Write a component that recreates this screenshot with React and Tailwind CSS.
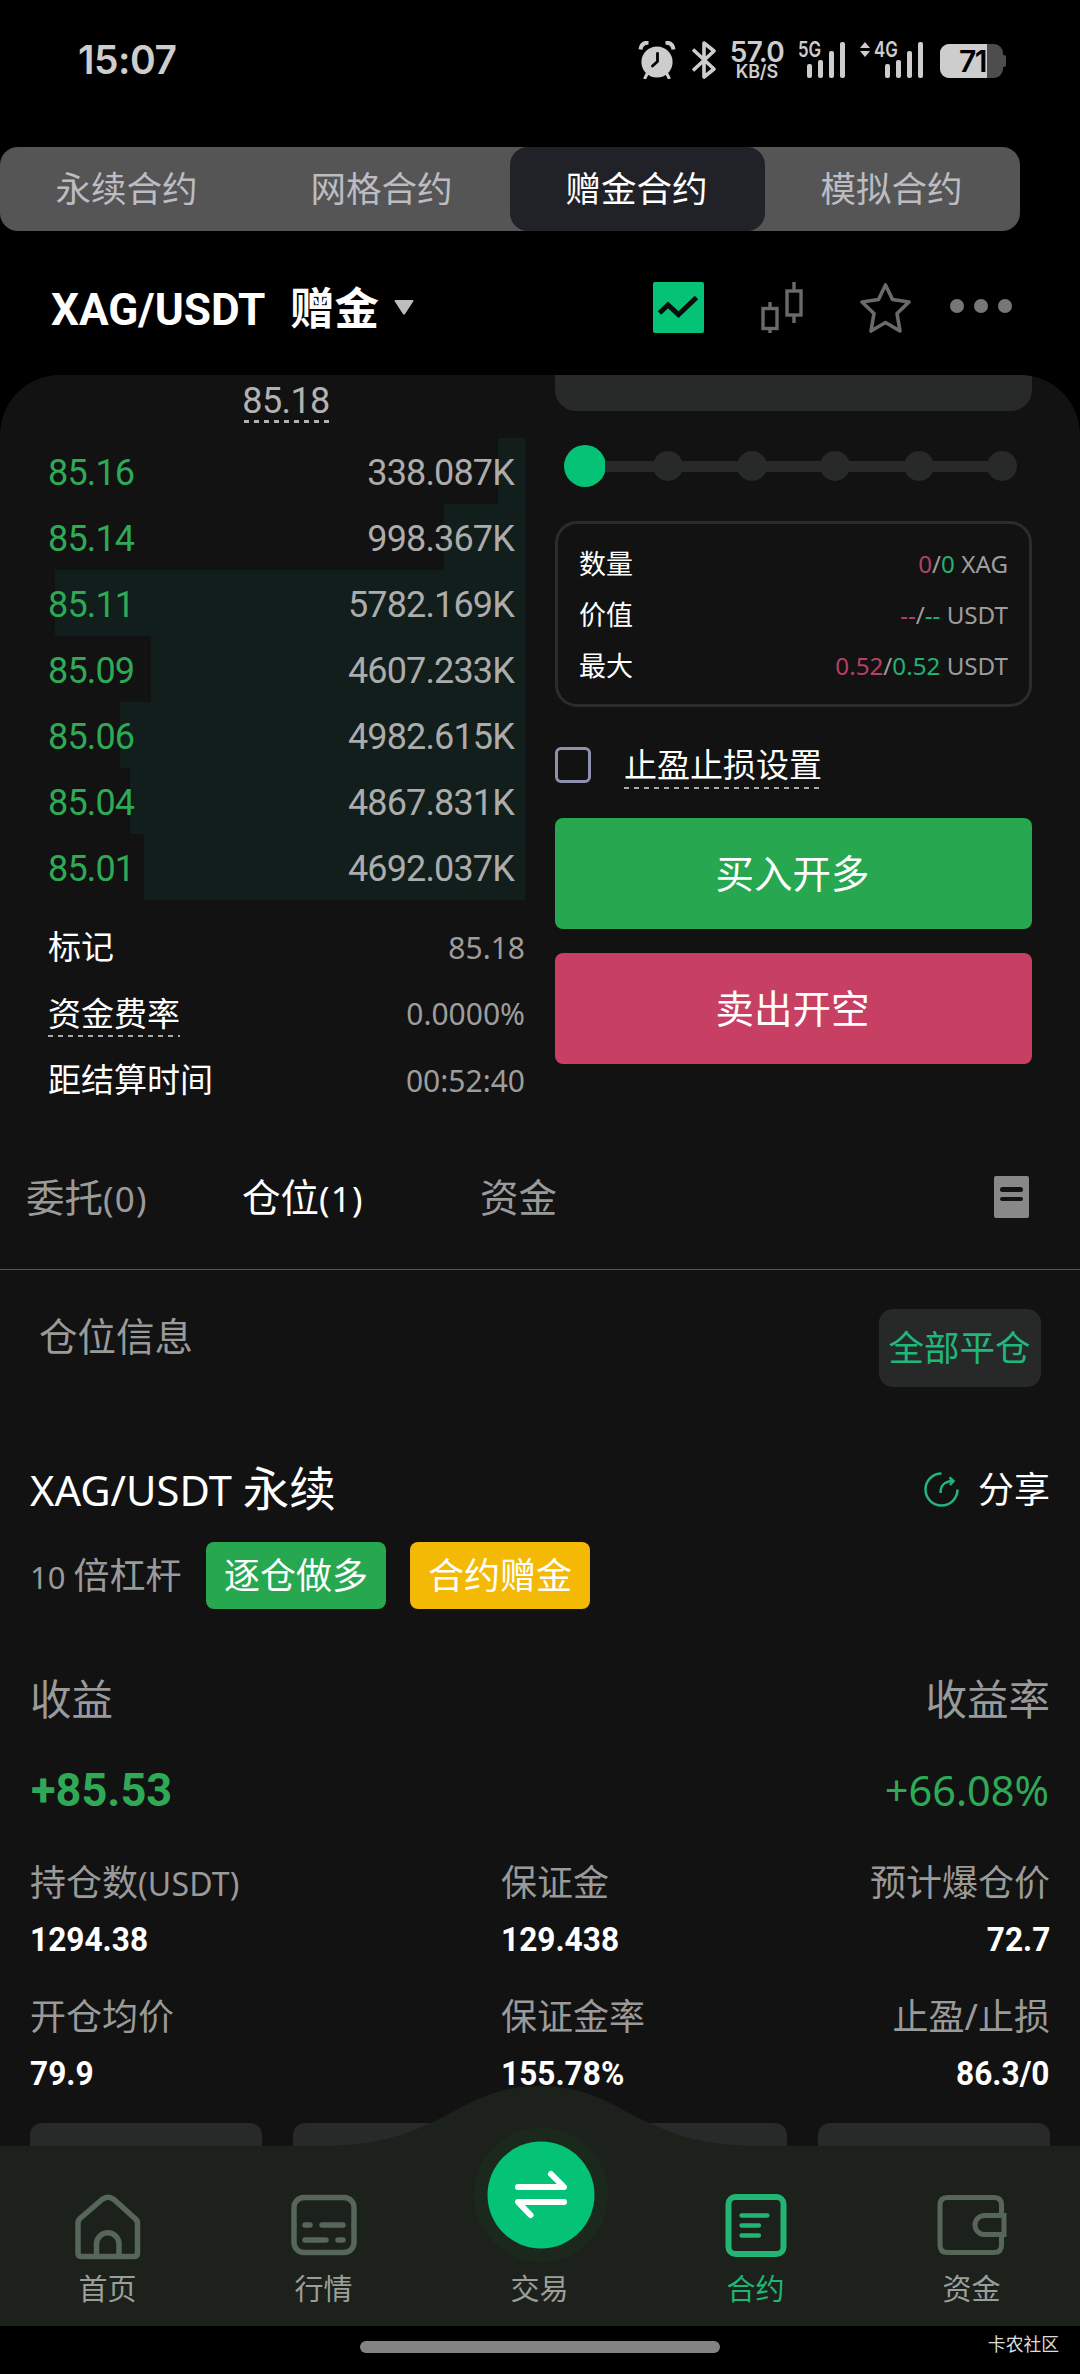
import React from "react";

const SANS = "font-['Noto_Sans','Noto_Sans_CJK_SC',sans-serif]";
const NUM = "font-['Roboto','Noto_Sans_CJK_SC',sans-serif]";
const UI = "font-['Inter','Noto_Sans',sans-serif]";

const DASH =
  "bg-[repeating-linear-gradient(90deg,currentColor_0_5px,transparent_5px_10px)]";

const bids = [
  { price: "85.16", amount: "338.087K", width: 27 },
  { price: "85.14", amount: "998.367K", width: 81 },
  { price: "85.11", amount: "5782.169K", width: 470 },
  { price: "85.09", amount: "4607.233K", width: 374 },
  { price: "85.06", amount: "4982.615K", width: 405 },
  { price: "85.04", amount: "4867.831K", width: 395 },
  { price: "85.01", amount: "4692.037K", width: 381 },
];

const stats = [
  [
    { label: "持仓数", unit: "(USDT)", value: "1294.38" },
    { label: "保证金", value: "129.438" },
    { label: "预计爆仓价", value: "72.7" },
  ],
  [
    { label: "开仓均价", value: "79.9" },
    { label: "保证金率", value: "155.78%" },
    { label: "止盈/止损", value: "86.3/0" },
  ],
];

function SignalBars() {
  return (
    <div className="flex items-end gap-[5.5px]">
      <i className="h-[14px] w-[5.4px] rounded-[2px] bg-[#cdcdcd]" />
      <i className="h-[18px] w-[5.4px] rounded-[2px] bg-[#cdcdcd]" />
      <i className="h-[27px] w-[5.4px] rounded-[2px] bg-[#cdcdcd]" />
      <i className="h-[36px] w-[5.4px] rounded-[2px] bg-[#cdcdcd]" />
    </div>
  );
}

function StatusBar() {
  return (
    <div className={`flex h-[147px] shrink-0 items-start text-[#cdcdcd] ${UI}`}>
      <div className="ml-[78px] mt-[40px] h-[40px] text-[39px] font-semibold leading-[40px] tracking-[-0.5px]">
        15:07
      </div>
      <div className="ml-auto mr-[74px] mt-[41px] flex h-[38px] items-start">
        <svg width="38" height="38" viewBox="0 0 38 38" fill="none">
          <circle cx="19" cy="21" r="15.600" fill="#cdcdcd" />
          <path d="M2.500 8.500 C3 4 6 1.500 10.500 1.700" stroke="#cdcdcd" strokeWidth="4" />
          <path d="M35.500 8.500 C35 4 32 1.500 27.500 1.700" stroke="#cdcdcd" strokeWidth="4" />
          <path d="M9 33 L7 37 M29 33 L31 37" stroke="#cdcdcd" strokeWidth="3" strokeLinecap="round" />
          <path d="M19.500 12.500 V20.500 L14.500 25" stroke="#000" strokeWidth="2.800" strokeLinecap="round" strokeLinejoin="round" />
        </svg>
        <svg className="ml-[15px]" width="26" height="38" viewBox="0 0 26 38" fill="none" stroke="#cdcdcd" strokeWidth="3.600" strokeLinejoin="round">
          <path d="M2 8.500 L23 28 L13 36 V2 L23 10 L2 29.500" />
        </svg>
        <div className="ml-[11px] flex w-[58px] flex-col items-center">
          <span className="h-[22px] text-[28px] font-semibold leading-[22px] tracking-[-0.7px]">57.0</span>
          <span className="h-[16px] text-[18px] font-semibold leading-[18px] tracking-[-0.2px]">KB/S</span>
        </div>
        <div className="ml-[12px] mt-px flex h-[36px]">
          <div className="flex h-[20px] w-[9px] items-start">
            <span className="-mt-[2px] w-[9px] origin-left scale-x-[0.8] text-[21px] font-semibold leading-[20px]">5G</span>
          </div>
          <SignalBars />
        </div>
        <div className="ml-[15px] mt-px flex h-[36px]">
          <svg className="mr-[4px]" width="10" height="15" viewBox="0 0 10 15">
            <path d="M5 0 L10 6 H0 Z M5 15 L10 9 H0 Z" fill="#cdcdcd" />
          </svg>
          <div className="flex h-[20px] w-[11px] items-start">
            <span className="-mt-[2px] w-[11px] origin-left scale-x-[0.8] text-[21px] font-semibold leading-[20px]">4G</span>
          </div>
          <SignalBars />
        </div>
        <div className="ml-[17px] mt-[3px] flex h-[34px] items-center">
          <div className="flex h-[34px] w-[63px] items-center overflow-hidden rounded-[9px] bg-[#4d4d4d]">
            <div className="flex h-[34px] w-[47px] items-center justify-end bg-[#cdcdcd] pr-px text-[30px] font-semibold leading-none tracking-[-1.5px] text-black">
              71
            </div>
          </div>
          <i className="h-[12px] w-[3px] rounded-r-[2px] bg-[#4d4d4d]" />
        </div>
      </div>
    </div>
  );
}

function ContractTabs() {
  const tabs = ["永续合约", "网格合约", "赠金合约", "模拟合约"];
  return (
    <div className="flex h-[84px] w-[1020px] shrink-0 rounded-[18px] bg-[#555555]">
      {tabs.map((t, i) => (
        <div
          key={t}
          className={
            i === 2
              ? "flex w-[255px] items-center justify-center rounded-[18px] bg-[#212227] pb-px pr-[2px] text-[35.500px] text-white"
              : "flex w-[255px] items-center justify-center pb-px pr-[2px] text-[35.500px] text-[#bcbcc2]"
          }
        >
          {t}
        </div>
      ))}
    </div>
  );
}

function PairHeader() {
  return (
    <div className="flex h-[144px] shrink-0 items-start pt-[51px]">
      <div className={`ml-[51px] mt-[2px] flex h-[51px] items-center font-bold text-white ${NUM}`}>
        <span className="w-[239px] text-[45px] leading-[51px]">
          <span className="inline-block origin-left scale-x-[0.98]">XAG/USDT</span>
        </span>
        <span className="mt-px text-[44.500px] leading-[51px]">赠金</span>
      </div>
      <svg className="ml-[15px] mt-[18px]" width="20" height="15" viewBox="0 0 20 15">
        <path d="M1.500 0 H18.500 Q20 0 19.200 1.500 L11 14 Q10 15 9 14 L0.800 1.500 Q0 0 1.500 0Z" fill="#bdbdbd" />
      </svg>
      <svg className="ml-auto" width="51" height="51" viewBox="0 0 51 51" fill="none">
        <rect width="51" height="51" rx="2" fill="#04c376" />
        <path d="M6.500 31 L15 23 L25.500 32.500 L43.500 15.500" stroke="#0c0c0c" strokeWidth="5" />
      </svg>
      <svg className="ml-[57px]" width="42" height="51" viewBox="0 0 42 51" fill="none" stroke="#6a6a6a" strokeWidth="3.400">
        <rect x="2" y="26.500" width="14" height="20" />
        <path d="M9 20 V26 M9 47 V51 M33 0 V8 M33 34 V41" />
        <rect x="26" y="9" width="14" height="24" />
      </svg>
      <svg className="ml-[56px]" width="53" height="51" viewBox="0 0 53 51" fill="none" stroke="#6a6a6a" strokeWidth="3.600" strokeLinejoin="round">
        <path d="M26.500 3 L33.500 17.500 L50 20 L38 31.500 L41 49 L26.500 40.500 L12 49 L15 31.500 L3 20 L19.500 17.500 Z" />
      </svg>
      <div className="ml-[38px] mr-[68px] mt-[17px] flex gap-[10px]">
        <i className="h-[14px] w-[14px] rounded-full bg-[#777777]" />
        <i className="h-[14px] w-[14px] rounded-full bg-[#777777]" />
        <i className="h-[14px] w-[14px] rounded-full bg-[#777777]" />
      </div>
    </div>
  );
}

function OrderBook() {
  return (
    <div className="flex w-[525px] flex-col">
      <div className={`flex h-[63px] flex-col items-center pl-[47px] text-[#b2b2b2] ${NUM}`}>
        <div className="mt-[5px] h-[40px] text-[36px] leading-[42px] tracking-[-0.6px]">85.18</div>
        <i className={`h-[3px] w-[85px] ${DASH}`} />
      </div>
      {bids.map((b) => (
        <div key={b.price} className={`relative flex h-[66px] items-center text-[36px] tracking-[-0.85px] ${NUM}`}>
          <div className="absolute inset-y-0 right-0 bg-[#111e1b]" style={{ width: b.width }} />
          <span className="relative ml-[48px] mt-[3px] text-[#2eaa57]">{b.price}</span>
          <span className="relative ml-auto mr-[11px] mt-[3px] text-[#acacac]">{b.amount}</span>
        </div>
      ))}
      <div className="mt-[14px] flex flex-col pl-[48px] text-[33px] text-white">
        <div className="flex h-[66px] items-center justify-between">
          <span>标记</span>
          <span className="text-[30px] text-[#9d9d9d]">85.18</span>
        </div>
        <div className="flex h-[67px] items-center justify-between">
          <span className="relative">
            资金费率
            <i className={`absolute bottom-px left-0 h-[2px] w-[132px] text-[#aaaaaa] ${DASH}`} />
          </span>
          <span className="text-[30px] text-[#9d9d9d]">0.0000%</span>
        </div>
        <div className="flex h-[66px] items-center justify-between">
          <span>距结算时间</span>
          <span className="text-[30px] text-[#9d9d9d]">00:52:40</span>
        </div>
      </div>
    </div>
  );
}

function InfoRow({ label, a, b, unit }) {
  return (
    <div className="flex h-[51px] items-center justify-between text-[27px] text-white">
      <span>{label}</span>
      <span className="text-[24.200px] text-[#9d9d9d]">
        <span className="text-[#b53f66]">{a}</span>/<span className="text-[#1fb272]">{b}</span> {unit}
      </span>
    </div>
  );
}

function OrderForm() {
  return (
    <div className="ml-[30px] flex w-[477px] flex-col">
      <div className="h-[36px] rounded-b-[21px] bg-[#282929]" />
      <div className="ml-[9px] mt-[34px] flex h-[42px] w-[453px] items-center">
        <i className="h-[42px] w-[42px] rounded-full bg-[#04c376]" />
        {[0, 1, 2, 3, 4].map((n) => (
          <React.Fragment key={n}>
            <i className={n === 0 ? "-mx-px h-[11px] w-[49px] bg-[#282929]" : "-mx-px h-[11px] w-[55.500px] bg-[#282929]"} />
            <i className="h-[30px] w-[30px] shrink-0 rounded-full bg-[#282929]" />
          </React.Fragment>
        ))}
      </div>
      <div className="mt-[34px] h-[186px] rounded-[22px] border-[3px] border-[#2b2c2c] px-[21px] pt-[15px]">
        <InfoRow label="数量" a="0" b="0" unit="XAG" />
        <InfoRow label="价值" a="--" b="--" unit="USDT" />
        <InfoRow label="最大" a="0.52" b="0.52" unit="USDT" />
      </div>
      <div className="mt-[40px] flex h-[36px] items-center text-[33px] text-white">
        <i className="h-[36px] w-[36px] rounded-[6px] border-[3px] border-[#8f90ad]" />
        <span className="relative ml-[33px]">
          止盈止损设置
          <i className={`absolute bottom-px left-0 h-[2px] w-[196px] text-[#aaaaaa] ${DASH}`} />
        </span>
      </div>
      <div className="mt-[35px] flex h-[111px] items-center justify-center rounded-[8px] bg-[#27a750] pr-[2px] text-[38.500px] text-white">
        买入开多
      </div>
      <div className="mt-[24px] flex h-[111px] items-center justify-center rounded-[8px] bg-[#c83f64] pr-[2px] text-[38.500px] text-white">
        卖出开空
      </div>
    </div>
  );
}

function PositionTabs() {
  return (
    <div className="flex h-[142px] items-center border-b border-[#555555] pb-[2px] text-[38.500px] text-[#9a9a9a]">
      <span className="ml-[26px] w-[216px]">
        委托<span className="text-[35px] tracking-[1.2px]">(0)</span>
      </span>
      <span className="w-[238px] text-white">
        仓位<span className="text-[35px] tracking-[1.2px]">(1)</span>
      </span>
      <span>资金</span>
      <div className="-mt-px ml-auto mr-[51px] flex h-[42px] w-[35px] flex-col items-center gap-[5px] rounded-[2px] bg-[#888888] pt-[11px]">
        <i className="h-[4.500px] w-[23px] rounded-full bg-[#121212]" />
        <i className="h-[4.500px] w-[23px] rounded-full bg-[#121212]" />
      </div>
    </div>
  );
}

function Position() {
  return (
    <div className="flex flex-col">
      <div className="flex h-[156px] items-start justify-between px-[39px]">
        <span className="mt-[40px] text-[38.500px] leading-[52px] text-[#9a9a9a]">仓位信息</span>
        <div className="mt-[39px] flex h-[78px] w-[162px] items-center justify-center rounded-[14px] bg-[#272929] pb-px pr-px text-[35.500px] text-[#1fb87a]">
          全部平仓
        </div>
      </div>
      <div className="flex h-[126px] items-center justify-between px-[30px] text-white">
        <span className="text-[46.500px]">
          <span className="text-[41.700px]">XAG/USDT </span>永续
        </span>
        <span className="mt-px flex items-center text-[36px]">
          <svg className="mr-[19px]" width="35" height="35" viewBox="0 0 35 35" fill="none" stroke="#22b67b" strokeWidth="2.500">
            <path d="M17.500 1.500 A16 16 0 1 0 33.500 17.500" />
            <path d="M16.500 21 C16.500 13 20 9.500 29 9" />
            <path d="M25.500 5.500 L29.500 9 L26 13" />
          </svg>
          分享
        </span>
      </div>
      <div className="-mt-[10px] flex h-[67px] items-center pl-[30px] text-[36px] text-[#9a9a9a]">
        <span className="w-[176px]">
          <span className="text-[31px]">10 </span>倍杠杆
        </span>
        <span className="flex h-[67px] w-[180px] items-center justify-center rounded-[8px] bg-[#27a750] text-white">
          逐仓做多
        </span>
        <span className="ml-[24px] flex h-[67px] w-[180px] items-center justify-center rounded-[8px] bg-[#f3b905] text-white">
          合约赠金
        </span>
      </div>
      <div className="mt-[60px] flex h-[60px] items-center justify-between px-[30px] text-[41.500px] text-[#9a9a9a]">
        <span>收益</span>
        <span>收益率</span>
      </div>
      <div className="mt-[30px] flex h-[62px] items-center justify-between px-[31px] text-[#2eaa57]">
        <span className={`mt-px origin-left scale-x-[0.96] text-[47px] font-bold ${NUM}`}>+85.53</span>
        <span className="mt-px text-[41.500px]">+66.08%</span>
      </div>
      <div className="mt-[33px] flex flex-col px-[30px]">
        {stats.map((row, r) => (
          <div key={r} className="flex h-[134px]">
            {row.map((s, i) => (
              <div
                key={s.label}
                className={i === 0 ? "flex w-[471px] flex-col" : i === 1 ? "flex flex-col" : "ml-auto flex flex-col items-end"}
              >
                <span className="h-[56px] text-[36px] leading-[58px] text-[#9a9a9a]">
                  {s.label}
                  {s.unit && <span className="text-[32px] tracking-[0.2px]">{s.unit}</span>}
                </span>
                <span
                  className={
                    i === 2
                      ? `h-[58px] origin-right scale-x-[0.93] text-[34px] font-bold leading-[58px] text-white ${NUM}`
                      : `h-[58px] origin-left scale-x-[0.93] text-[34px] font-bold leading-[58px] text-white ${NUM}`
                  }
                >
                  {s.value}
                </span>
              </div>
            ))}
          </div>
        ))}
      </div>
      <div className="mt-px flex justify-between px-[30px]">
        {[0, 1, 2, 3].map((n) => (
          <i key={n} className="h-[60px] w-[232px] rounded-[12px] bg-[#282929]" />
        ))}
      </div>
    </div>
  );
}

function HomeIcon() {
  return (
    <svg width="66" height="66" viewBox="0 0 66 66" fill="none" stroke="#566658" strokeWidth="5.500" strokeLinejoin="round">
      <path d="M3 29 Q3 26.500 5 24.500 L27 5.500 Q33 1 39 5.500 L60 24.500 Q62.500 26.500 62.500 29 V59 Q62.500 62.500 59 62.500 H6.500 Q3 62.500 3 59 Z" />
      <path d="M21.500 62 V49 A11.300 11.300 0 0 1 44 49 V62" />
    </svg>
  );
}

function MarketIcon() {
  return (
    <svg width="66" height="66" viewBox="0 0 66 66" fill="none" stroke="#566658" strokeWidth="5.500" strokeLinecap="round">
      <rect x="3" y="3.500" width="60" height="55" rx="10" />
      <path d="M14 31 H19 M31 31 H52 M14 46 H35 M47 46 H52" />
    </svg>
  );
}

function ContractIcon() {
  return (
    <svg width="62" height="66" viewBox="0 0 62 66" fill="none" stroke="#22b573" strokeWidth="6" strokeLinecap="round">
      <rect x="3.500" y="3" width="55" height="57" rx="7" />
      <path strokeWidth="4.300" d="M16.500 21.500 H42.500 M16.500 31.500 H34 M16.500 41.500 H34" />
    </svg>
  );
}

function WalletIcon() {
  return (
    <svg width="70" height="66" viewBox="0 0 70 66" fill="none" stroke="#566658" strokeWidth="5">
      <path d="M64.500 20 V11 Q64.500 3.500 57 3.500 H10.500 Q3 3.500 3 11 V51 Q3 58.500 10.500 58.500 H57 Q64.500 58.500 64.500 51 V41" />
      <path d="M67 21.500 H47.500 A9.500 9.500 0 0 0 47.500 40.500 H67 Z" />
    </svg>
  );
}

function NavItem({ icon, label, active }) {
  return (
    <div className="flex w-[216px] flex-col items-center pr-px pt-[108px]">
      <div className="flex h-[66px] items-start justify-center">{icon}</div>
      <span
        className={
          active
            ? "mt-[8px] text-[29px] leading-[42px] text-[#1fb574]"
            : "mt-[8px] text-[29px] leading-[42px] text-[#9a9f99]"
        }
      >
        {label}
      </span>
    </div>
  );
}

function BottomNav() {
  return (
    <div className="absolute inset-x-0 bottom-[48px] h-[240px]">
      <svg className="absolute inset-0" width="1080" height="240" viewBox="0 0 1080 240">
        <path d="M0 60 H320 C445 60 455 0 540 0 C625 0 635 60 760 60 H1080 V240 H0 Z" fill="#1d211c" />
        <circle cx="541" cy="109" r="67" fill="#1b291d" />
        <circle cx="541" cy="109" r="53.500" fill="#04c376" />
        <g fill="none" stroke="#fff" strokeWidth="6" strokeLinecap="round" strokeLinejoin="round">
          <path d="M518 101 H564 L551 88" />
          <path d="M564 116 H518 L530.500 129" />
        </g>
      </svg>
      <div className="relative flex">
        <NavItem icon={<HomeIcon />} label="首页" />
        <NavItem icon={<MarketIcon />} label="行情" />
        <NavItem label="交易" />
        <NavItem icon={<ContractIcon />} label="合约" active />
        <NavItem icon={<WalletIcon />} label="资金" />
      </div>
    </div>
  );
}

export default function App() {
  return (
    <div className={`relative flex h-[2374px] w-[1080px] flex-col overflow-hidden bg-black not-italic ${SANS}`}>
      <StatusBar />
      <ContractTabs />
      <PairHeader />
      <div className="flex h-[1951px] shrink-0 flex-col overflow-hidden rounded-t-[60px] bg-[#121212]">
        <div className="flex h-[753px] shrink-0">
          <OrderBook />
          <OrderForm />
        </div>
        <PositionTabs />
        <Position />
      </div>
      <BottomNav />
      <div className="flex h-[48px] shrink-0 items-start">
        <i className="ml-[360px] mt-[15px] h-[12px] w-[360px] rounded-full bg-[#838383]" />
        <span className="ml-auto mr-[21px] mt-[4px] text-[17.800px] leading-[28px] text-[#dddddd]">卡农社区</span>
      </div>
    </div>
  );
}
